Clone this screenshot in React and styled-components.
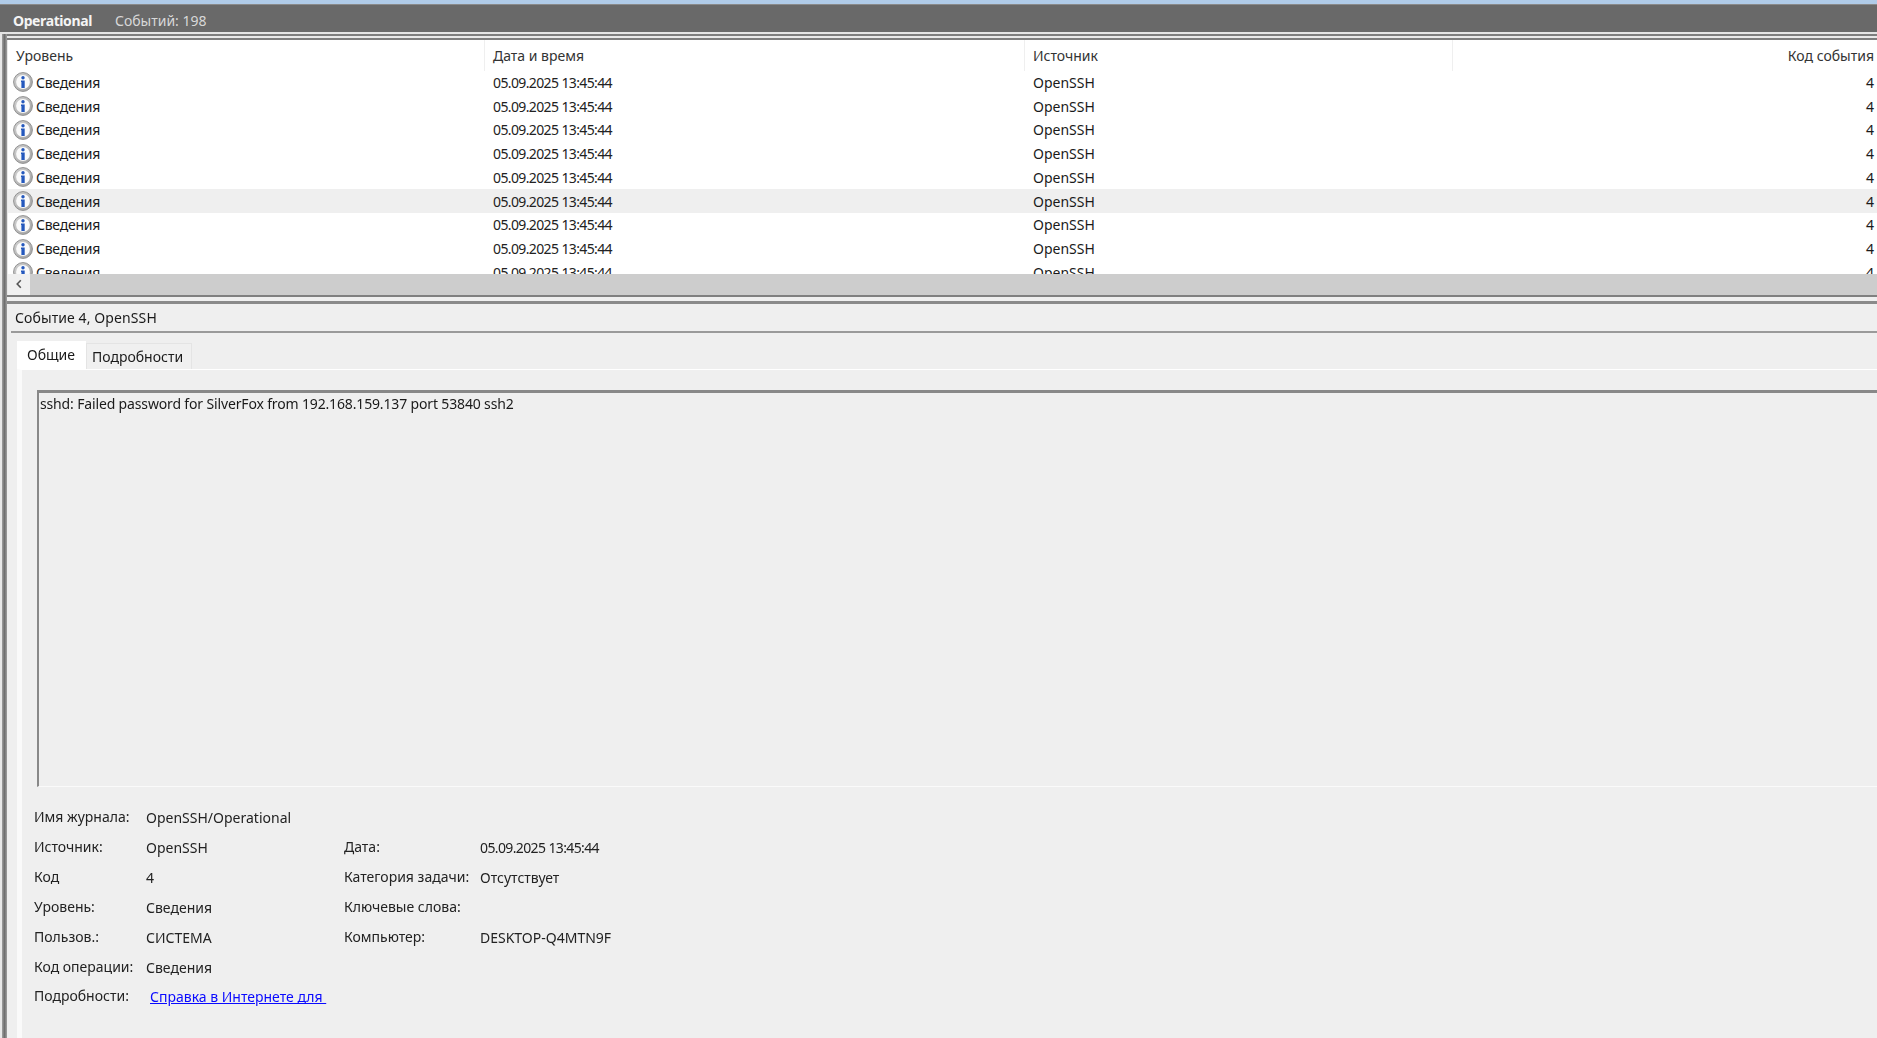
import styled, { createGlobalStyle } from 'styled-components';

const ROWS = Array.from({ length: 9 }, (_, index) => index);
const SELECTED_ROW = 5;
const COLUMNS = '477px 540px 428px 1fr';

const META_ROWS = [
  ['Имя журнала:', 'OpenSSH/Operational', '', ''],
  ['Источник:', 'OpenSSH', 'Дата:', '05.09.2025 13:45:44'],
  ['Код', '4', 'Категория задачи:', 'Отсутствует'],
  ['Уровень:', 'Сведения', 'Ключевые слова:', ''],
  ['Пользов.:', 'СИСТЕМА', 'Компьютер:', 'DESKTOP-Q4MTN9F'],
  ['Код операции:', 'Сведения', '', ''],
];

function InfoIcon() {
  return (
    <svg width="20" height="20" viewBox="0 0 20 20">
      <defs>
        <linearGradient id="ring" x1="0" y1="0" x2="1" y2="1">
          <stop offset="0" stopColor="#d4d4d4" />
          <stop offset="1" stopColor="#a0a0a0" />
        </linearGradient>
      </defs>
      <circle cx="10" cy="10" r="9.4" fill="url(#ring)" stroke="#909090" strokeWidth="1" />
      <circle cx="10" cy="10" r="6.9" fill="#fafafa" />
      <circle cx="10" cy="5.7" r="1.7" fill="#2458bd" />
      <path d="M8 8.5h3.7v7.6H8.4v-6H8z" fill="#2458bd" />
    </svg>
  );
}

export default function App() {
  return (
    <Page>
      <GlobalStyle />
      <TopStrip />
      <TitleBar>
        <LogName>Operational</LogName>
        <EventCount>Событий: 198</EventCount>
      </TitleBar>
      <Workspace>
        <Rail />
        <Main>
          <ListPane>
            <List>
              <Row as="header" $header>
                <HeaderCell>Уровень</HeaderCell>
                <HeaderCell>Дата и время</HeaderCell>
                <HeaderCell>Источник</HeaderCell>
                <HeaderCell $right>Код события</HeaderCell>
              </Row>
              {ROWS.map(index => (
                <Row key={index} $selected={index === SELECTED_ROW}>
                  <LevelCell>
                    <InfoIcon />
                    Сведения
                  </LevelCell>
                  <Cell>
                    <DateText>05.09.2025 13:45:44</DateText>
                  </Cell>
                  <Cell>OpenSSH</Cell>
                  <Cell $right>4</Cell>
                </Row>
              ))}
            </List>
            <ScrollBar>
              <ScrollButton>
                <svg width="8" height="10" viewBox="0 0 8 10">
                  <path d="M5.8 1.2 2.2 5l3.6 3.8" fill="none" stroke="#555" strokeWidth="1.6" />
                </svg>
              </ScrollButton>
            </ScrollBar>
          </ListPane>
          <DetailPane>
            <DetailTitle>Событие 4, OpenSSH</DetailTitle>
            <TabControl>
              <Tabs>
                <Tab $active>Общие</Tab>
                <Tab>Подробности</Tab>
              </Tabs>
              <TabPanel>
                <MessageBox>
                  sshd: Failed password for SilverFox from 192.168.159.137 port
                  53840 ssh2
                </MessageBox>
                <Meta>
                  {META_ROWS.map(([label, value, label2, value2]) => (
                    <MetaRow key={label}>
                      <MetaLabel>{label}</MetaLabel>
                      <MetaValue>{value}</MetaValue>
                      <MetaLabel>{label2}</MetaLabel>
                      {label2 === 'Дата:' ? (
                        <DateText>{value2}</DateText>
                      ) : (
                        <MetaValue>{value2}</MetaValue>
                      )}
                    </MetaRow>
                  ))}
                  <MetaRow>
                    <MetaLabel>Подробности:</MetaLabel>
                    <HelpLink href="#">Справка в Интернете для </HelpLink>
                  </MetaRow>
                </Meta>
              </TabPanel>
            </TabControl>
          </DetailPane>
        </Main>
      </Workspace>
    </Page>
  );
}

const GlobalStyle = createGlobalStyle`
  html, body {
    margin: 0;
    height: 100%;
    overflow: hidden;
  }
  body {
    background: #efefef;
    font-family: "Noto Sans", "Open Sans", sans-serif;
    font-size: 14px;
    color: #1a1a1a;
  }
`;

const Page = styled.div`
  width: 1877px;
  height: 1038px;
  display: flex;
  flex-direction: column;
  overflow: hidden;
  filter: blur(0.3px);
`;

const TopStrip = styled.div`
  height: 4px;
  flex: none;
  background: #b0cbe8;
`;

const TitleBar = styled.div`
  height: 24px;
  flex: none;
  display: flex;
  align-items: center;
  padding: 3px 13px 0;
  gap: 23px;
  background: #696969;
  border-top: 1px solid #8a8a8a;
  border-bottom: 2px solid #e4e4e4;
`;

const LogName = styled.span`
  font-weight: 700;
  letter-spacing: -0.4px;
  color: #f4f4f4;
`;

const EventCount = styled.span`
  color: #d8d8d8;
`;

const DateText = styled.span`
  letter-spacing: -0.62px;
  color: #222;
`;

const Workspace = styled.div`
  flex: 1;
  display: flex;
  min-height: 0;
`;

const Rail = styled.div`
  width: 5px;
  flex: none;
  background: linear-gradient(90deg, #a0a0a0, #6f6f6f 50%, #a0a0a0);
  border-left: 2px solid #e8e8e8;
`;

const Main = styled.div`
  flex: 1;
  min-width: 0;
  display: flex;
  flex-direction: column;
`;

const ListPane = styled.section`
  flex: none;
  padding-left: 1px;
  background: #e8e8e8;
  border-top: 6px double #7d7d7d;
  border-bottom: 2px solid #808080;
`;

const List = styled.div`
  height: 234px;
  overflow: hidden;
  background: #fff;
`;

const Row = styled.div`
  display: grid;
  grid-template-columns: ${COLUMNS};
  align-items: center;
  height: ${p => (p.$header ? '30.5px' : '23.75px')};
  background: ${p => (p.$selected ? '#efefef' : 'transparent')};
`;

const HeaderCell = styled.div`
  height: 100%;
  display: flex;
  align-items: center;
  justify-content: ${p => (p.$right ? 'flex-end' : 'flex-start')};
  padding: 0 3px 0 8px;
  color: #333;
  border-right: 1px solid #efefef;

  &:last-child {
    border-right: 0;
  }
`;

const Cell = styled.div`
  padding: 0 3px 0 8px;
  text-align: ${p => (p.$right ? 'right' : 'left')};
`;

const LevelCell = styled.div`
  display: flex;
  align-items: center;
  gap: 3px;
  padding-left: 5px;
  letter-spacing: -0.25px;
`;

const ScrollBar = styled.div`
  height: 21px;
  display: flex;
  background: #cdcdcd;
`;

const ScrollButton = styled.div`
  width: 22px;
  display: flex;
  align-items: center;
  justify-content: center;
  padding-bottom: 1px;
  box-sizing: border-box;
  background: #f0f0f0;
`;

const DetailPane = styled.section`
  flex: 1;
  min-height: 0;
  margin-top: 4px;
  background: #efefef;
  border-top: 3px solid #8a8a8a;
`;

const DetailTitle = styled.h2`
  height: 27px;
  margin: 0 0 0 4px;
  padding-left: 4px;
  display: flex;
  align-items: center;
  font-size: 14px;
  font-weight: 400;
  letter-spacing: 0.1px;
  border-bottom: 2px solid #9a9a9a;
`;

const TabControl = styled.div`
  margin: 8px 0 0 10px;
`;

const Tabs = styled.div`
  display: flex;
  align-items: flex-end;
  height: 28px;
`;

const Tab = styled.div`
  display: flex;
  align-items: center;
  box-sizing: border-box;
  padding-left: ${p => (p.$active ? '10px' : '5px')};
  padding-bottom: ${p => (p.$active ? '2px' : '0')};
  width: ${p => (p.$active ? '69px' : '106px')};
  height: ${p => (p.$active ? '28px' : '26px')};
  background: ${p => (p.$active ? '#fff' : '#f0f0f0')};
  border: ${p => (p.$active ? '0' : '1px solid #e4e4e4')};
  border-bottom: 0;
`;

const TabPanel = styled.div`
  height: 668px;
  padding: 20px 0 0 15px;
  background: #efefef;
  border-top: 1px solid #fff;
  border-left: 5px solid #fafafa;
`;

const MessageBox = styled.div`
  height: 397px;
  width: 1900px;
  padding: 1px 1px;
  box-sizing: border-box;
  border-top: 3px solid #888;
  border-left: 2px solid #888;
  border-bottom: 1px solid #fafafa;
  letter-spacing: -0.15px;
`;

const Meta = styled.div`
  margin: 16px 0 0 -3px;
  display: flex;
  flex-direction: column;
`;

const MetaRow = styled.div`
  display: grid;
  grid-template-columns: 112px 198px 136px 1fr;
  align-items: center;
  height: 29.85px;
`;

const MetaLabel = styled.span`
  color: #222;
  transform: translateY(-1px);
`;

const MetaValue = styled.span`
  color: #222;
`;

const HelpLink = styled.a`
  grid-column: 2 / 4;
  margin-left: 4px;
  white-space: pre;
  color: #0a0aff;
`;
